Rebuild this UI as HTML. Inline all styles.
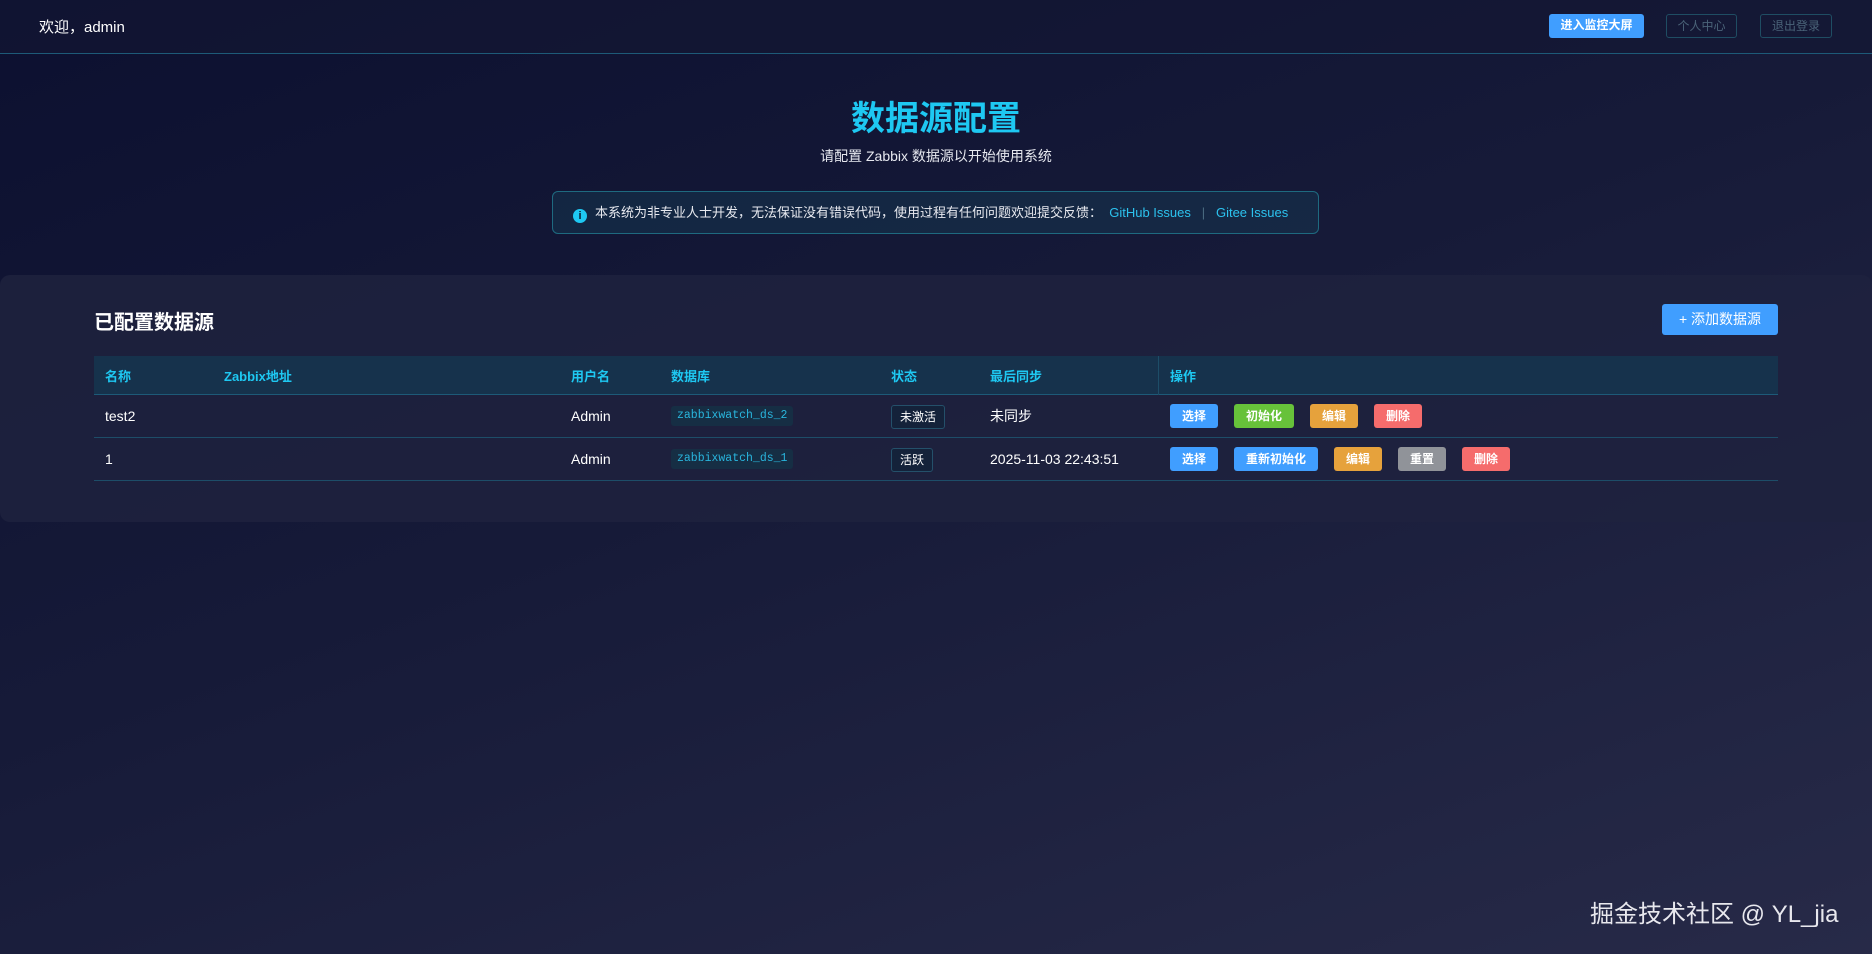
<!DOCTYPE html>
<html><head><meta charset="utf-8"><style>
*{box-sizing:border-box;margin:0;padding:0}
body{width:1872px;height:954px;overflow:hidden;font-family:"Liberation Sans","Noto Sans CJK SC",sans-serif;color:#fff;background:linear-gradient(160deg,#0c1030 0%,#161a38 45%,#272a48 100%);position:relative}
.abs{position:absolute}
.hdr{left:0;top:0;width:1872px;height:54px;border-bottom:1px solid #1d5a78;background:rgba(20,24,52,.6)}
.hb{position:absolute;top:14px;height:24px;font-size:12px;line-height:22px;text-align:center;border-radius:3px;font-weight:bold}
.title{left:0;width:1872px;text-align:center;top:97px;font-size:34px;line-height:44px;font-weight:bold;color:#1ec8f2}
.sub{left:0;width:1872px;text-align:center;top:146px;font-size:14px;line-height:20px;color:#e6e8ef}
.notice{left:552px;top:191px;width:767px;height:43px;border:1px solid #1e6a80;border-radius:6px;background:rgba(22,60,85,.45);font-size:13px;line-height:41px;padding-left:20px;color:#e8eaf0}
.notice a{color:#2cc2ee;text-decoration:none}
.card{left:0;top:275px;width:1872px;height:247px;border-radius:10px;background:rgba(30,34,62,.85)}
.th{position:absolute;top:356px;height:39px;left:94px;width:1684px;background:#16324c;border-bottom:1px solid #1d5a78}
.thc{position:absolute;top:12px;font-size:13px;line-height:18px;font-weight:bold;color:#1ec8f2}
.row{position:absolute;left:94px;width:1684px;height:43px;border-bottom:1px solid #1d4d68}
.td{position:absolute;top:12px;font-size:14px;line-height:18px;color:#fff}
.code{position:absolute;top:11px;height:20px;padding:0 6px;background:#162e44;border-radius:3px;font-family:"Liberation Mono",monospace;font-size:11.5px;color:#29b5dd;line-height:20px}
.tag{position:absolute;top:10px;height:24px;padding:0 8px;border:1px solid #24506a;border-radius:3px;background:#14223a;font-size:12px;line-height:22px}
.b{position:absolute;top:9px;height:24px;border-radius:3px;font-size:12px;font-weight:bold;line-height:24px;text-align:center;color:#fff}
.bl{background:#409eff}.gr{background:#67c23a}.or{background:#e6a23c}.rd{background:#f56c6c}.gy{background:#909399}
</style></head><body>
<div class="abs hdr"></div>
<div class="abs" style="left:39px;top:18px;font-size:15px;line-height:20px">欢迎，admin</div>
<div class="hb" style="left:1549px;width:95px;background:#409eff;color:#fff">进入监控大屏</div>
<div class="hb" style="left:1666px;width:71px;border:1px solid #1f4d63;color:#4a6378;font-weight:normal">个人中心</div>
<div class="hb" style="left:1760px;width:72px;border:1px solid #1f4d63;color:#4a6378;font-weight:normal">退出登录</div>
<div class="abs title">数据源配置</div>
<div class="abs sub">请配置 Zabbix 数据源以开始使用系统</div>
<div class="abs notice"><span style="display:inline-block;width:14px;height:14px;border-radius:50%;background:#1ec8f2;color:#0c1a30;font-size:11px;line-height:14px;text-align:center;font-weight:bold;vertical-align:-2px;margin-right:8px">i</span>本系统为非专业人士开发，无法保证没有错误代码，使用过程有任何问题欢迎提交反馈： &nbsp;<a>GitHub Issues</a> &nbsp;&nbsp;<span style="color:#4a6a80">|</span>&nbsp;&nbsp; <a>Gitee Issues</a></div>
<div class="abs card"></div>
<div class="abs" style="left:94px;top:310px;font-size:20px;line-height:26px;font-weight:bold">已配置数据源</div>
<div class="abs" style="left:1662px;top:304px;width:116px;height:31px;background:#409eff;border-radius:3px;font-size:14px;line-height:31px;text-align:center">+ 添加数据源</div>
<div class="th">
<div class="thc" style="left:11px">名称</div><div class="thc" style="left:130px">Zabbix地址</div><div class="thc" style="left:477px">用户名</div><div class="thc" style="left:577px">数据库</div><div class="thc" style="left:797px">状态</div><div class="thc" style="left:896px">最后同步</div>
<div style="position:absolute;left:1064px;top:0;width:1px;height:39px;background:#1d4d68"></div>
<div class="thc" style="left:1076px">操作</div></div>
<div class="row" style="top:395px">
<div class="td" style="left:11px">test2</div><div class="td" style="left:477px">Admin</div><div class="code" style="left:577px">zabbixwatch_ds_2</div><div class="tag" style="left:797px">未激活</div><div class="td" style="left:896px">未同步</div>
<div class="b bl" style="left:1076px;width:48px">选择</div><div class="b gr" style="left:1140px;width:60px">初始化</div><div class="b or" style="left:1216px;width:48px">编辑</div><div class="b rd" style="left:1280px;width:48px">删除</div></div>
<div class="row" style="top:438px">
<div class="td" style="left:11px">1</div><div class="td" style="left:477px">Admin</div><div class="code" style="left:577px">zabbixwatch_ds_1</div><div class="tag" style="left:797px">活跃</div><div class="td" style="left:896px">2025-11-03 22:43:51</div>
<div class="b bl" style="left:1076px;width:48px">选择</div><div class="b bl" style="left:1140px;width:84px">重新初始化</div><div class="b or" style="left:1240px;width:48px">编辑</div><div class="b gy" style="left:1304px;width:48px">重置</div><div class="b rd" style="left:1368px;width:48px">删除</div></div>
<div class="abs" style="left:1590px;top:900px;font-size:24px;line-height:30px;color:#e8e8ee">掘金技术社区 @ YL_jia</div>
</body></html>
